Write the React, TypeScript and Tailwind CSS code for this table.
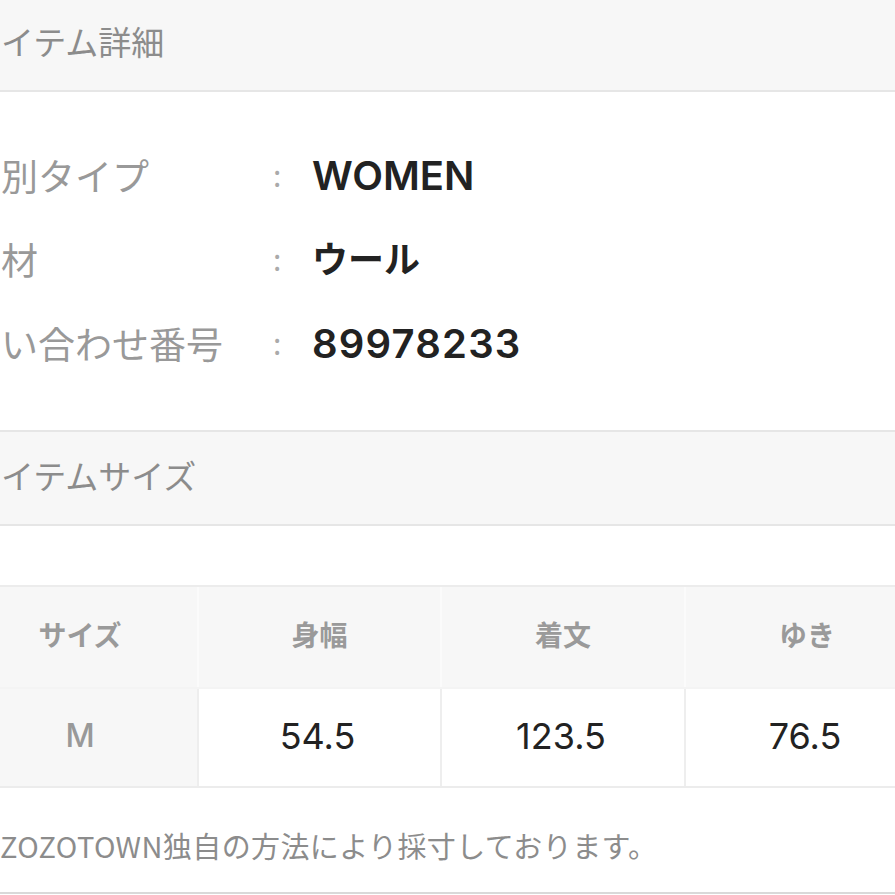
const jp = "font-['Noto_Sans_CJK_JP',sans-serif]";
const latin = "font-['Inter','Noto_Sans_CJK_JP',sans-serif]";

interface DetailRow {
  label: string;
  value: string;
  valueClass: string;
}

const details: DetailRow[] = [
  { label: '別タイプ', value: 'WOMEN', valueClass: 'text-[40px]' },
  { label: '材', value: 'ウール', valueClass: 'text-[36px] font-medium' },
  { label: 'い合わせ番号', value: '89978233', valueClass: 'text-[40px] tracking-[1.2px]' },
];

const sizeHead = ['サイズ', '身幅', '着文', 'ゆき'];
const sizeRow = ['M', '54.5', '123.5', '76.5'];

function SectionHeader({ title, className }: { title: string; className?: string }) {
  return (
    <div className={`flex items-center bg-[#f7f7f7] border-[#e6e6e6] ${className ?? ''}`}>
      <span className={`${jp} text-[33px] leading-none text-[#8c8c8c] pl-[1px]`}>{title}</span>
    </div>
  );
}

export default function App() {
  return (
    <div className="w-[895px] h-[895px] overflow-hidden bg-white">
      {/* アイテム詳細 */}
      <SectionHeader title="イテム詳細" className="h-[92px] pb-[8px] border-b-2" />

      <div className="pt-[42px] pb-[44px]">
        {details.map((row) => (
          <div key={row.label} className="grid grid-cols-[270px_42px_1fr] items-center h-[84px]">
            <span className={`${jp} text-[37px] leading-none text-[#999] pl-[1px] -mt-[2px]`}>{row.label}</span>
            <span className={`${jp} text-[30px] leading-none text-[#aaa] pl-[3px] -mt-[4px]`}>:</span>
            <span className={`${latin} ${row.valueClass} leading-none font-semibold text-[#222]`}>{row.value}</span>
          </div>
        ))}
      </div>

      {/* アイテムサイズ */}
      <SectionHeader title="イテムサイズ" className="h-[96px] pb-[6px] border-y-2" />

      <div className="pt-[59px]">
        <div className="w-[928px] border-y-2 border-[#ececec]">
          <div className="grid grid-cols-[197px_243px_244px_244px] h-[100px] bg-[#f7f7f7]">
            {sizeHead.map((h, i) => (
              <div
                key={h}
                className={`flex items-center justify-center pb-[6px] ${i > 0 ? 'border-l-2 border-[#fbfbfb]' : ''}`}
              >
                <span className={`${jp} text-[28px] leading-none font-bold text-[#9a9a9a] ${i === 0 ? 'pr-[37px]' : ''}`}>
                  {h}
                </span>
              </div>
            ))}
          </div>
          <div className="grid grid-cols-[197px_243px_244px_244px] h-[99px] border-t-2 border-[#f4f4f4]">
            {sizeRow.map((v, i) => (
              <div
                key={v}
                className={`flex items-center justify-center pb-[4px] ${
                  i === 0 ? 'bg-[#f7f7f7]' : 'bg-white border-l-2 border-[#eeeeee]'
                }`}
              >
                {i === 0 ? (
                  <span className={`${latin} text-[32px] leading-none font-medium text-[#999] pr-[37px]`}>{v}</span>
                ) : (
                  <span className={`${latin} text-[36px] leading-none text-[#222] pr-[4px]`}>{v}</span>
                )}
              </div>
            ))}
          </div>
        </div>
      </div>

      <div className="h-[106px] flex items-center pt-[10px] border-b-2 border-[#d9d9d9]">
        <span className={`${jp} text-[29px] leading-none text-[#8c8c8c] tracking-[0.4px]`}>
          ZOZOTOWN独自の方法により採寸しております。
        </span>
      </div>
    </div>
  );
}
